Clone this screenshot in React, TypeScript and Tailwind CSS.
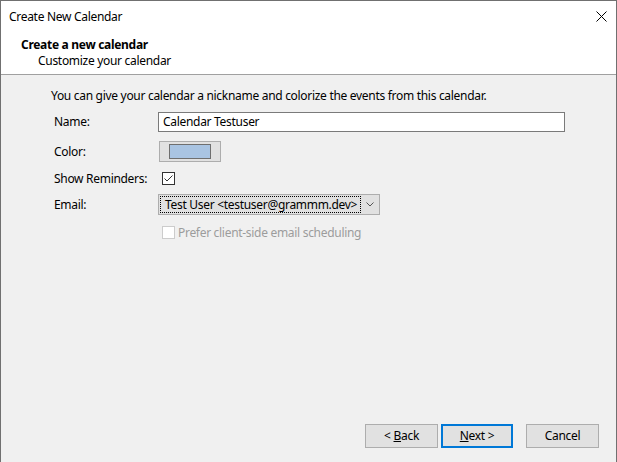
import React from "react";

const FONT = { fontFamily: '"Noto Sans", "Open Sans", sans-serif' };

function CheckBox({ checked, disabled }: { checked?: boolean; disabled?: boolean }) {
  return (
    <div
      className={
        "w-[13px] h-[13px] border flex items-center justify-center " +
        (disabled ? "border-[#cccccc] bg-white" : "border-[#333333] bg-white")
      }
    >
      {checked && (
        <svg width="11" height="11" viewBox="0 0 11 11">
          <path d="M1.5 5.5 L4 8 L9.5 2.5" fill="none" stroke="#333" strokeWidth="1" />
        </svg>
      )}
    </div>
  );
}

function Row({ label, className, children }: { label: string; className?: string; children: React.ReactNode }) {
  return (
    <div className={"flex items-center " + (className ?? "")}>
      <div className="w-[104px] shrink-0">{label}</div>
      {children}
    </div>
  );
}

export default function App() {
  return (
    <div
      className="w-[617px] h-[462px] bg-[#f0f0f0] border-x border-t border-[#707070] flex flex-col text-[12px] tracking-[-0.3px] whitespace-nowrap text-black leading-none"
      style={FONT}
    >
      {/* title bar */}
      <div className="h-[31px] bg-white flex items-center justify-between pl-[8px] pr-[9px] shrink-0">
        <span>Create New Calendar</span>
        <svg width="11" height="11" viewBox="0 0 11 11" className="mb-[1px]">
          <path d="M0.5 0.5 L10.5 10.5 M10.5 0.5 L0.5 10.5" stroke="#000" strokeWidth="1" />
        </svg>
      </div>

      {/* header */}
      <div className="h-[43px] bg-white border-b border-[#a0a0a0] pl-[20px] shrink-0 flex flex-col pt-[7px]">
        <span className="font-bold">Create a new calendar</span>
        <span className="pl-[17px] mt-[4px]">Customize your calendar</span>
      </div>

      {/* content */}
      <div className="flex-1 flex flex-col pl-[50px] pt-[15px]">
        <p>You can give your calendar a nickname and colorize the events from this calendar.</p>

        <div className="flex flex-col pl-[3px]">
          <Row label="Name:" className="mt-[10px]">
            <div className="w-[407px] h-[20px] bg-white border border-[#7a7a7a] flex items-center pl-[4px]">
              Calendar Testuser
            </div>
          </Row>

          <Row label="Color:" className="mt-[9px]">
            <div className="w-[62px] h-[21px] ml-[1px] bg-[#e1e1e1] border border-[#adadad] flex items-center justify-center">
              <div className="w-[42px] h-[15px] bg-[#a9c4e2] border border-[#6f6f6f]" />
            </div>
          </Row>

          <Row label="Show Reminders:" className="mt-[9px] h-[15px]">
            <div className="pl-[4px] flex items-center">
              <CheckBox checked />
            </div>
          </Row>

          <Row label="Email:" className="mt-[8px]">
            <div className="w-[222px] h-[21px] bg-[#e1e1e1] border border-[#adadad] flex items-center p-[1px]">
              <div className="w-[201px] h-[17px] border border-dotted border-black flex items-center pl-[4px]">
                Test User &lt;testuser@grammm.dev&gt;
              </div>
              <div className="flex-1 flex items-center justify-center">
                <svg width="8" height="5" viewBox="0 0 8 5">
                  <path d="M0.5 0.5 L4 4 L7.5 0.5" fill="none" stroke="#555" strokeWidth="1" />
                </svg>
              </div>
            </div>
          </Row>

          <div className="flex items-center h-[15px] mt-[10px] pl-[108px] text-[#9c9c9c]">
            <CheckBox disabled />
            <span className="ml-[3px]">Prefer client-side email scheduling</span>
          </div>
        </div>
      </div>

      {/* buttons */}
      <div className="flex justify-end pr-[17px] pb-[14px] shrink-0">
        <div className="w-[73px] h-[24px] bg-[#e1e1e1] border border-[#adadad] flex items-center justify-center">
          &lt; <span className="underline ml-[3px]">B</span>ack
        </div>
        <div className="w-[72px] h-[24px] ml-[3px] bg-[#e1e1e1] border-2 border-[#0078d7] flex items-center justify-center">
          <span className="underline">N</span>ext &gt;
        </div>
        <div className="w-[73px] h-[24px] ml-[13px] bg-[#e1e1e1] border border-[#adadad] flex items-center justify-center">
          Cancel
        </div>
      </div>
    </div>
  );
}
